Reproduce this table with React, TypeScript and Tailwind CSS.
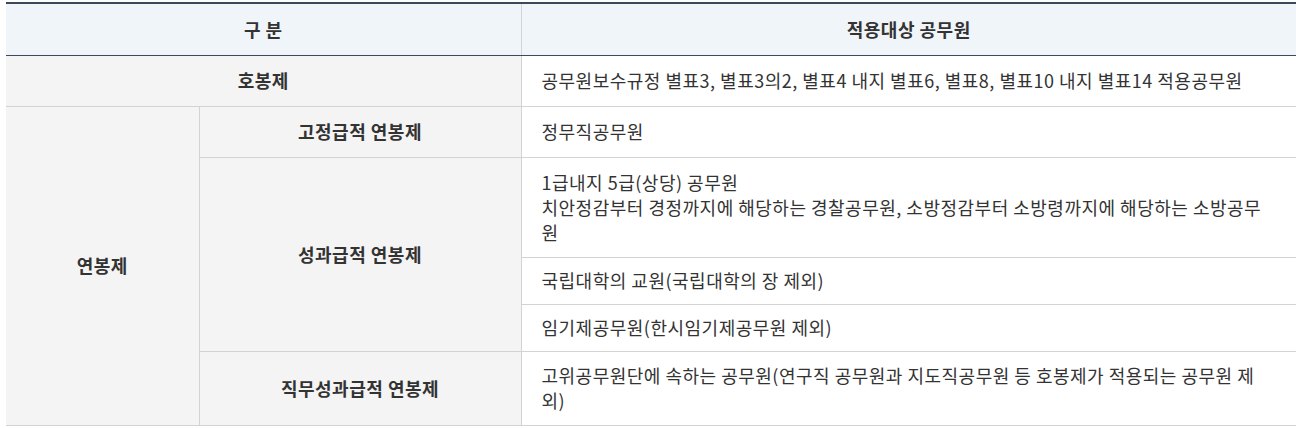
const font = { fontFamily: '"Noto Sans CJK KR", "Noto Sans", sans-serif' };

export default function App() {
  const th = "border-b border-[#3b4a5c] bg-[#f0f5f9] font-bold text-center";
  const head = "bg-[#f4f4f4] border border-[#d3d3d3] text-center font-bold";
  const body = "border border-[#d3d3d3] border-r-0 px-5 text-left";

  return (
    <div className="bg-white pt-[2px] pl-[6px]" style={font}>
      <table className="w-[1290px] table-fixed border-collapse text-[18px] leading-[25px] tracking-[0.5px] text-[#333]">
        <colgroup>
          <col className="w-[193px]" />
          <col className="w-[322px]" />
          <col className="w-[775px]" />
        </colgroup>
        <thead>
          <tr className="h-[52px] border-t-2 border-[#3b4a5c]">
            <th colSpan={2} className={`${th} border-r border-r-[#d3d3d3]`}>
              구 분
            </th>
            <th className={th}>적용대상 공무원</th>
          </tr>
        </thead>
        <tbody>
          <tr className="h-[51px]">
            <td colSpan={2} className={`${head} border-l-0`}>
              호봉제
            </td>
            <td className={body}>
              공무원보수규정 별표3, 별표3의2, 별표4 내지 별표6, 별표8, 별표10 내지 별표14 적용공무원
            </td>
          </tr>
          <tr className="h-[51px]">
            <td rowSpan={5} className={`${head} border-l-0`}>
              연봉제
            </td>
            <td className={head}>고정급적 연봉제</td>
            <td className={body}>정무직공무원</td>
          </tr>
          <tr className="h-[100px]">
            <td rowSpan={3} className={head}>
              성과급적 연봉제
            </td>
            <td className={body}>
              1급내지 5급(상당) 공무원
              <br />
              치안정감부터 경정까지에 해당하는 경찰공무원, 소방정감부터 소방령까지에 해당하는 소방공무원
            </td>
          </tr>
          <tr className="h-[47px]">
            <td className={body}>국립대학의 교원(국립대학의 장 제외)</td>
          </tr>
          <tr className="h-[47px]">
            <td className={body}>임기제공무원(한시임기제공무원 제외)</td>
          </tr>
          <tr className="h-[74px]">
            <td className={head}>직무성과급적 연봉제</td>
            <td className={body}>
              고위공무원단에 속하는 공무원(연구직 공무원과 지도직공무원 등 호봉제가 적용되는 공무원 제외)
            </td>
          </tr>
        </tbody>
      </table>
    </div>
  );
}
